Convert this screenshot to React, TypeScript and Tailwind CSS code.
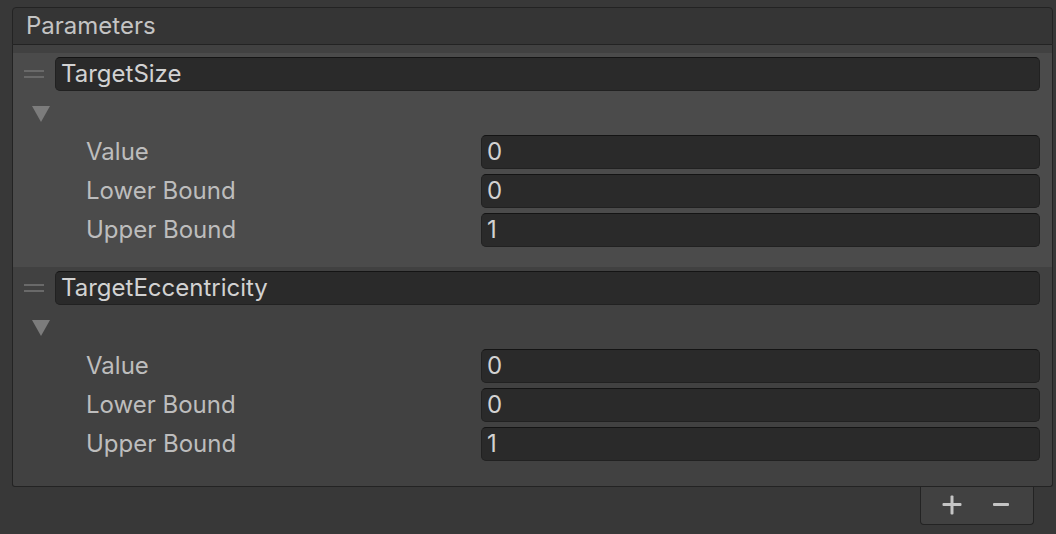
import React from "react";

type Param = { name: string; value: string; lower: string; upper: string; highlighted?: boolean };

const params: Param[] = [
  { name: "TargetSize", value: "0", lower: "0", upper: "1", highlighted: true },
  { name: "TargetEccentricity", value: "0", lower: "0", upper: "1" },
];

function Field({ text, className = "" }: { text: string; className?: string }) {
  return (
    <div
      className={`flex h-[34px] items-center rounded-[5px] border border-[#212121] border-t-[#141414] bg-[#2a2a2a] pl-[5px] text-[24px] leading-none text-[#d2d2d2] ${className}`}
    >
      {text}
    </div>
  );
}

function Row({ label, value }: { label: string; value: string }) {
  return (
    <div className="flex h-[34px] items-center">
      <div className="w-[468px] shrink-0 pl-[73px] text-[24px] leading-none text-[#bdbdbd]">{label}</div>
      <Field text={value} className="flex-1" />
    </div>
  );
}

function Element({ p }: { p: Param }) {
  return (
    <div className={`pt-[4px] pb-[20px] pr-[12px] ${p.highlighted ? "bg-[#4b4b4b]" : "bg-[#414141]"}`}>
      <div className="flex items-center">
        <div className="flex w-[42px] shrink-0 flex-col gap-[4px] pl-[11px]">
          <div className="h-[2px] w-[20px] bg-[#696969]" />
          <div className="h-[2px] w-[20px] bg-[#696969]" />
        </div>
        <Field text={p.name} className="flex-1" />
      </div>
      <div className="h-[44px] pl-[19px] pt-[15px]">
        <svg width="18" height="16" viewBox="0 0 18 16">
          <polygon points="0,0 18,0 9,16" fill="#7c7c7c" />
        </svg>
      </div>
      <div className="flex flex-col gap-[5px]">
        <Row label="Value" value={p.value} />
        <Row label="Lower Bound" value={p.lower} />
        <Row label="Upper Bound" value={p.upper} />
      </div>
    </div>
  );
}

export default function App() {
  return (
    <div
      className="h-[534px] w-[1056px] overflow-hidden bg-[#383838] pl-[12px] pr-[3px] pt-[7px]"
      style={{ fontFamily: "Inter, 'Noto Sans', sans-serif" }}
    >
      <div className="flex h-[38px] items-center rounded-t-[4px] border border-[#232323] bg-[#353535] pl-[13px] text-[24px] leading-none text-[#c4c4c4]">
        Parameters
      </div>
      <div className="rounded-b-[3px] border-x border-b border-[#232323] bg-[#414141] pt-[8px] pb-[5px]">
        {params.map((p) => (
          <Element key={p.name} p={p} />
        ))}
      </div>
      <div className="flex justify-end pr-[19px]">
        <div className="flex h-[38px] w-[114px] items-start gap-[31px] rounded-b-[4px] border-x border-b border-[#232323] bg-[#414141] pl-[21px] pt-[8px]">
          <svg width="20" height="20" viewBox="0 0 20 20">
            <rect x="8.5" y="0.5" width="3" height="19" rx="1" fill="#c4c4c4" />
            <rect x="0.5" y="8" width="19" height="3" rx="1" fill="#c4c4c4" />
          </svg>
          <svg width="16" height="20" viewBox="0 0 16 20">
            <rect x="0" y="8" width="16" height="3" rx="1" fill="#c4c4c4" />
          </svg>
        </div>
      </div>
    </div>
  );
}
